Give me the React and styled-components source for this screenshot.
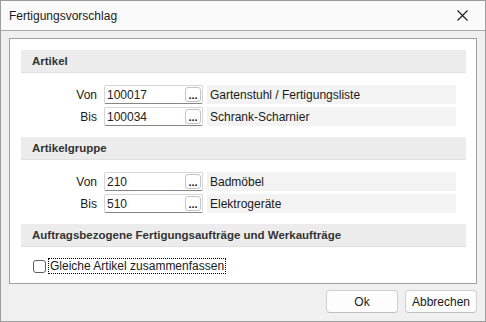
import React from "react";
import styled, { createGlobalStyle } from "styled-components";

const Global = createGlobalStyle`
  html, body { margin: 0; padding: 0; background: #ffffff; }
  * { box-sizing: border-box; }
  body { font-family: "Liberation Sans", Arial, sans-serif; font-size: 12px; color: #1a1a1a; }
`;

const Window = styled.div`
  width: 486px;
  height: 322px;
  border: 1px solid #9c9c9c;
  display: flex;
  flex-direction: column;
  background: #f0f0f0;
`;

const TitleBar = styled.div`
  height: 30px;
  flex: none;
  background: #fafafa;
  border-bottom: 1px solid #a9a9a9;
  display: flex;
  align-items: center;
  justify-content: space-between;
  padding: 0 17px 0 8px;
`;

const Title = styled.span`
  font-size: 12px;
  color: #1a1a1a;
`;

const Body = styled.div`
  flex: 1;
  display: flex;
  flex-direction: column;
  padding: 7px 8px 8px 8px;
`;

const Panel = styled.div`
  flex: 1;
  background: #ffffff;
  border: 1px solid #a0a0a0;
  padding: 11px 10px 0 11px;
  display: flex;
  flex-direction: column;
`;

const SectionHeader = styled.div`
  height: 23px;
  background: #ececec;
  border-bottom: 1px solid #e0e0e0;
  display: flex;
  align-items: center;
  padding-left: 11px;
  font-weight: bold;
  font-size: 11.5px;
  color: #333333;
`;

const Rows = styled.div`
  display: flex;
  flex-direction: column;
  gap: 3px;
  padding: 12px 0 11px;
`;

const Row = styled.div`
  display: flex;
  align-items: center;
  height: 19px;
`;

const Label = styled.span`
  width: 76px;
  text-align: right;
  margin-right: 7px;
  color: #1a1a1a;
`;

const InputBox = styled.div`
  width: 99px;
  height: 19px;
  border: 1px solid #d6d6d6;
  border-bottom-color: #868686;
  border-radius: 2px;
  background: #ffffff;
  display: flex;
  align-items: center;
  padding: 0 1px 0 2px;
  margin-right: 4px;
`;

const InputText = styled.span`
  flex: 1;
  color: #222222;
`;

const DotsButton = styled.div`
  width: 16px;
  height: 15px;
  border: 1px solid #c4c4c4;
  border-radius: 3px;
  background: #ffffff;
  display: flex;
  align-items: flex-end;
  justify-content: center;
  font-weight: bold;
  font-size: 11px;
  line-height: 10px;
  color: #111111;
  padding-bottom: 1px;
`;

const Description = styled.div`
  width: 249px;
  height: 19px;
  background: #f3f3f3;
  display: flex;
  align-items: center;
  padding-left: 3px;
  color: #1a1a1a;
`;

const CheckRow = styled.div`
  display: flex;
  align-items: center;
  padding: 11px 0 0 12px;
`;

const CheckBox = styled.span`
  width: 13px;
  height: 13px;
  border: 1px solid #5e5e5e;
  border-radius: 3px;
  background: #ffffff;
  margin-right: 2px;
`;

const CheckLabel = styled.span`
  border: 1px dotted #000000;
  padding: 0 1px;
  line-height: 14px;
  color: #1a1a1a;
`;

const Footer = styled.div`
  display: flex;
  justify-content: flex-end;
  gap: 7px;
  padding-top: 6px;
`;

const Button = styled.button`
  width: 72px;
  height: 23px;
  border: 1px solid #d0d0d0;
  border-bottom-color: #c0c0c0;
  border-radius: 4px;
  background: #fdfdfd;
  font-family: inherit;
  font-size: 12px;
  color: #1a1a1a;
  padding: 0;
`;

const fields = [
  {
    title: "Artikel",
    rows: [
      { label: "Von", value: "100017", desc: "Gartenstuhl / Fertigungsliste" },
      { label: "Bis", value: "100034", desc: "Schrank-Scharnier" },
    ],
  },
  {
    title: "Artikelgruppe",
    rows: [
      { label: "Von", value: "210", desc: "Badmöbel" },
      { label: "Bis", value: "510", desc: "Elektrogeräte" },
    ],
  },
];

export default function App() {
  return (
    <>
      <Global />
      <Window>
        <TitleBar>
          <Title>Fertigungsvorschlag</Title>
          <svg width="11" height="11" viewBox="0 0 11 11">
            <path d="M0.5 0.5 L10.5 10.5 M10.5 0.5 L0.5 10.5" stroke="#1a1a1a" strokeWidth="1.1" />
          </svg>
        </TitleBar>
        <Body>
          <Panel>
            {fields.map((s) => (
              <React.Fragment key={s.title}>
                <SectionHeader>{s.title}</SectionHeader>
                <Rows>
                  {s.rows.map((r) => (
                    <Row key={r.label}>
                      <Label>{r.label}</Label>
                      <InputBox>
                        <InputText>{r.value}</InputText>
                        <DotsButton>...</DotsButton>
                      </InputBox>
                      <Description>{r.desc}</Description>
                    </Row>
                  ))}
                </Rows>
              </React.Fragment>
            ))}
            <SectionHeader>Auftragsbezogene Fertigungsaufträge und Werkaufträge</SectionHeader>
            <CheckRow>
              <CheckBox />
              <CheckLabel>Gleiche Artikel zusammenfassen</CheckLabel>
            </CheckRow>
          </Panel>
          <Footer>
            <Button>Ok</Button>
            <Button>Abbrechen</Button>
          </Footer>
        </Body>
      </Window>
    </>
  );
}
